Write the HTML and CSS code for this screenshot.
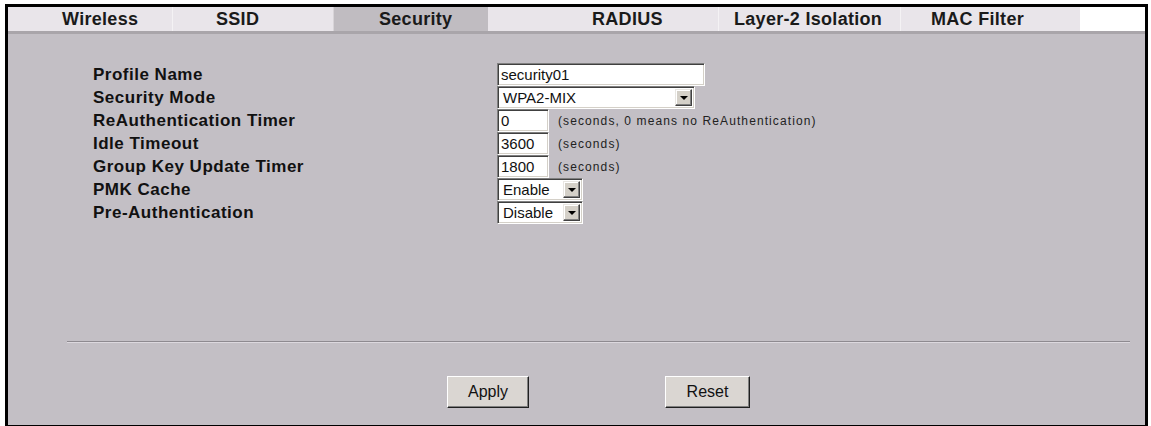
FILE: index.html
```html
<!DOCTYPE html>
<html>
<head>
<meta charset="utf-8">
<link rel="stylesheet" href="styles.css">
</head>
<body>
<div class="frame">
  <div class="tabs">
    <div class="tab t-wireless">Wireless</div>
    <div class="tab t-ssid">SSID</div>
    <div class="tab t-security active">Security</div>
    <div class="tab t-radius">RADIUS</div>
    <div class="tab t-l2">Layer-2 Isolation</div>
    <div class="tab t-mac">MAC Filter</div>
    <div class="tab-fill"></div>
  </div>
  <div class="content">
    <div class="form">
      <div class="label">Profile Name</div>
      <div class="field"><input class="text wide" type="text" value="security01"></div>

      <div class="label">Security Mode</div>
      <div class="field"><div class="select s-mode"><span class="sel-text">WPA2-MIX</span><span class="arrow"></span></div></div>

      <div class="label">ReAuthentication Timer</div>
      <div class="field"><input class="text short" type="text" value="0"><span class="hint">(seconds, 0 means no ReAuthentication)</span></div>

      <div class="label">Idle Timeout</div>
      <div class="field"><input class="text short" type="text" value="3600"><span class="hint">(seconds)</span></div>

      <div class="label">Group Key Update Timer</div>
      <div class="field"><input class="text short" type="text" value="1800"><span class="hint">(seconds)</span></div>

      <div class="label">PMK Cache</div>
      <div class="field"><div class="select s-small"><span class="sel-text">Enable</span><span class="arrow"></span></div></div>

      <div class="label">Pre-Authentication</div>
      <div class="field"><div class="select s-small"><span class="sel-text">Disable</span><span class="arrow"></span></div></div>
    </div>
    <div class="sep"></div>
    <div class="buttons">
      <button class="btn b-apply">Apply</button>
      <button class="btn b-reset">Reset</button>
    </div>
  </div>
</div>
</body>
</html>
```
FILE: styles.css
```css
html, body {
  margin: 0;
  padding: 0;
  background: #ffffff;
}
body {
  font-family: "Liberation Sans", Arial, sans-serif;
}
.frame {
  margin: 4px 3px 0 5px;
  height: 418px;
  border: 3px solid #000;
  background: #c3bfc5;
  display: flex;
  flex-direction: column;
  box-sizing: content-box;
}
.tabs {
  display: flex;
  height: 24px;
  border-bottom: 3px solid #a9a5aa;
}
.tab {
  background: #e9e5ea;
  font-weight: bold;
  font-size: 18px;
  letter-spacing: 0.3px;
  color: #1a1a1a;
  text-align: left;
  line-height: 24px;
  border-left: 1px solid #f4f2f4;
  box-sizing: border-box;
  white-space: nowrap;
}
.tab.active {
  background: #c0bcc1;
  border-left: 1px solid #d8d4d8;
}
.t-wireless { width: 164px; padding-left: 54px; border-left: none; }
.t-ssid { width: 161px; padding-left: 43px; }
.t-security { width: 155px; padding-left: 45px; }
.t-radius { width: 230px; padding-left: 104px; border-left: none; }
.t-l2 { width: 182px; padding-left: 15px; }
.t-mac { width: 180px; padding-left: 30px; }
.tab-fill {
  flex: 1;
  background: #ffffff;
}
.content {
  flex: 1;
  display: flex;
  flex-direction: column;
}
.form {
  margin: 29px 0 0 85px;
  display: grid;
  grid-template-columns: 404px auto;
  grid-auto-rows: 23px;
  align-items: center;
}
.label {
  font-weight: bold;
  font-size: 17px;
  letter-spacing: 0.5px;
  color: #111;
}
.field {
  display: flex;
  align-items: center;
  height: 23px;
}
.text {
  height: 23px;
  box-sizing: border-box;
  border: 1px solid;
  border-color: #808080 #ffffff #ffffff #808080;
  box-shadow: inset 1px 1px 0 #404040, inset -1px -1px 0 #d4d0c8;
  background: #fff;
  font-family: "Liberation Sans", Arial, sans-serif;
  font-size: 15px;
  color: #111;
  padding: 0 3px;
  margin: 0;
  outline: none;
}
.wide { width: 208px; }
.short { width: 52px; }
.hint {
  margin-left: 9px;
  font-size: 12px;
  letter-spacing: 1.1px;
  color: #222;
}
.select {
  height: 23px;
  box-sizing: border-box;
  border: 1px solid;
  border-color: #808080 #ffffff #ffffff #808080;
  box-shadow: inset 1px 1px 0 #404040, inset -1px -1px 0 #d4d0c8;
  background: #fff;
  display: flex;
  align-items: center;
  padding: 2px;
}
.s-mode { width: 198px; }
.s-small { width: 86px; }
.sel-text {
  flex: 1;
  font-size: 15px;
  color: #111;
  padding-left: 3px;
  white-space: nowrap;
}
.arrow {
  width: 17px;
  height: 17px;
  flex: none;
  box-sizing: border-box;
  background: #d4d0c8;
  border: 1px solid;
  border-color: #e8e6e2 #404040 #404040 #e8e6e2;
  box-shadow: inset -1px -1px 0 #808080, inset 1px 1px 0 #ffffff;
  display: flex;
  align-items: center;
  justify-content: center;
}
.arrow::after {
  content: "";
  border-left: 4px solid transparent;
  border-right: 4px solid transparent;
  border-top: 4px solid #000;
}
.sep {
  margin: 117px 15px 0 59px;
  height: 1px;
  background: #8e8a90;
  border-bottom: 1px solid #dcd8de;
}
.buttons {
  display: flex;
  margin: 33px 0 0 439px;
  gap: 136px;
}
.btn {
  height: 32px;
  box-sizing: border-box;
  background: #dad6d2;
  border: 1px solid;
  border-color: #ffffff #202020 #202020 #ffffff;
  box-shadow: inset -1px -1px 0 #808080;
  font-family: "Liberation Sans", Arial, sans-serif;
  font-size: 16px;
  color: #111;
  padding: 0;
}
.b-apply { width: 82px; }
.b-reset { width: 85px; }
```
